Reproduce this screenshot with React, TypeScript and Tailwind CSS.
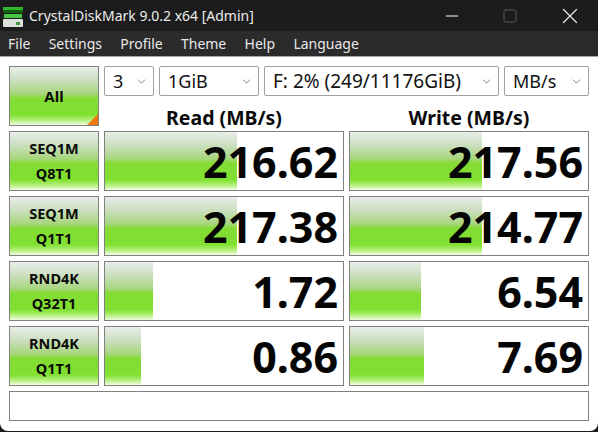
import React from 'react';
import { ChevronDown, Minus, Square, X } from 'lucide-react';

const barFill =
  'bg-[linear-gradient(to_bottom,#e9eee9_0%,#cfe0c6_20%,#a8d67e_46%,#84dc34_54%,#80e030_82%,#b0ee74_91%,#f2fce4_100%)]';

interface Row {
  line1: string;
  line2: string;
  read: string;
  readBar: number;
  write: string;
  writeBar: number;
}

const rows: Row[] = [
  { line1: 'SEQ1M', line2: 'Q8T1', read: '216.62', readBar: 132, write: '217.56', writeBar: 132 },
  { line1: 'SEQ1M', line2: 'Q1T1', read: '217.38', readBar: 132, write: '214.77', writeBar: 132 },
  { line1: 'RND4K', line2: 'Q32T1', read: '1.72', readBar: 48, write: '6.54', writeBar: 71 },
  { line1: 'RND4K', line2: 'Q1T1', read: '0.86', readBar: 36, write: '7.69', writeBar: 74 },
];

const Combo = ({ label, className }: { label: string; className: string }) => (
  <div
    className={`flex h-[30px] items-center justify-between rounded-[2px] border border-[#a0a0a0] bg-white pl-[8px] pr-[5px] text-[#111] ${className}`}
  >
    <span className="whitespace-nowrap">{label}</span>
    <ChevronDown className="h-[13px] w-[13px] text-[#666]" strokeWidth={1.5} />
  </div>
);

const Score = ({ value, bar }: { value: string; bar: number }) => (
  <div className="relative flex h-full w-[240px] items-center justify-end border border-[#808080] bg-white pr-[5px]">
    <div className={`absolute bottom-0 left-0 top-0 ${barFill}`} style={{ width: bar }} />
    <span className="relative text-[43px] font-bold leading-none text-[#050505]">{value}</span>
  </div>
);

const App: React.FC = () => {
  return (
    <div className="h-[432px] w-[598px] overflow-hidden bg-[#1c1c1c] font-['Noto_Sans','Open_Sans',sans-serif]">
      <div className="h-[431px] overflow-hidden rounded-b-[8px] bg-white">
        {/* title bar */}
        <div className="flex h-[31px] items-center bg-[#1c1c1c] text-white">
          <svg className="ml-[2px] h-[24px] w-[22px]" viewBox="0 0 22 24">
            <rect x="1" y="3" width="20" height="3" fill="#2fb52f" />
            <rect x="1" y="6" width="20" height="3" fill="#0f5f0f" />
            <rect x="2" y="10" width="18" height="4" fill="#46c846" />
            <rect x="1" y="15" width="20" height="8" rx="1" fill="#dde0d8" />
            <rect x="14" y="18" width="4" height="3" fill="#4a8f4a" />
          </svg>
          <span className="ml-[5px] text-[14px] text-[#ececec]">CrystalDiskMark 9.0.2 x64 [Admin]</span>
          <div className="ml-auto flex items-center pr-[15px]">
            <Minus className="h-[20px] w-[20px] text-white" strokeWidth={1.2} />
            <Square className="ml-[40px] h-[16px] w-[16px] text-[#5a5a5a]" strokeWidth={1.5} />
            <X className="ml-[39px] h-[26px] w-[26px] text-[#eee]" strokeWidth={1.1} />
          </div>
        </div>
        {/* menu */}
        <div className="flex h-[25px] items-center gap-[18.3px] bg-[#2b2b2b] pl-[8px] text-[14px] text-[#e8e8e8]">
          <span>File</span>
          <span>Settings</span>
          <span>Profile</span>
          <span>Theme</span>
          <span>Help</span>
          <span>Language</span>
        </div>
        <div className="h-[1px] bg-[#a8a8a8]" />

        {/* body */}
        <div className="flex flex-col gap-[5px] px-[9px] pt-[9px]">
          <div className="flex h-[60px] gap-[5px]">
            <div className={`relative flex w-[90px] items-center justify-center overflow-hidden border border-[#808080] text-[15px] font-bold text-[#0a0a0a] ${barFill}`}>
              All
              <div className="absolute bottom-0 right-0 h-0 w-0 border-b-[11px] border-l-[11px] border-b-[#f07810] border-l-transparent" />
            </div>
            <div className="flex w-[485px] flex-col">
              <div className="flex gap-[5px]">
                <Combo label="3" className="w-[50px] text-[18px]" />
                <Combo label="1GiB" className="w-[100px] text-[18px]" />
                <Combo label="F: 2% (249/11176GiB)" className="w-[235px] text-[19px]" />
                <Combo label="MB/s" className="w-[85px] text-[18px]" />
              </div>
              <div className="flex h-[30px] items-start gap-[5px] pt-[9px] text-[19.5px] font-bold leading-[26px] text-[#0a0a0a]">
                <div className="w-[240px] text-center">Read (MB/s)</div>
                <div className="w-[240px] text-center">Write (MB/s)</div>
              </div>
            </div>
          </div>

          {rows.map((r, i) => (
            <div key={i} className="relative flex h-[60px] gap-[5px]">
              <div className={`flex w-[90px] flex-col items-center justify-center border border-[#808080] text-[14.5px] font-bold leading-[25px] text-[#0a0a0a] ${barFill}`}>
                <span>{r.line1}</span>
                <span>{r.line2}</span>
              </div>
              <Score value={r.read} bar={r.readBar} />
              <Score value={r.write} bar={r.writeBar} />
            </div>
          ))}

          <div className="h-[30px] w-[580px] border border-[#808080] bg-white" />
        </div>
      </div>
    </div>
  );
};

export default App;
